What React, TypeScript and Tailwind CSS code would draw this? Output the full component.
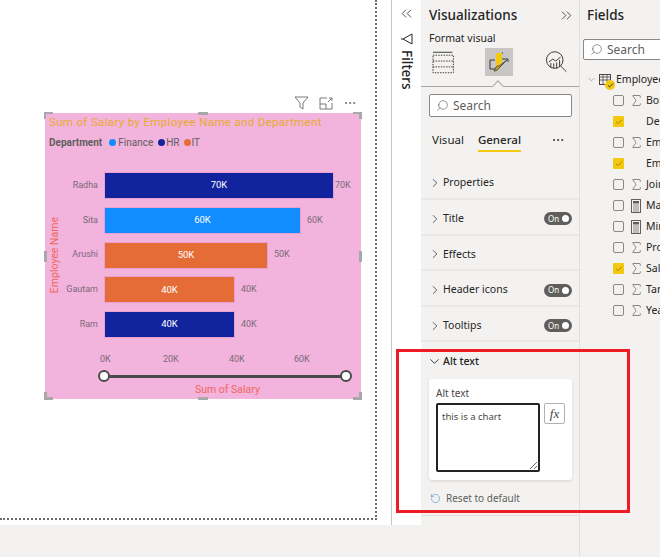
import { ChevronDown, ChevronRight, ChevronsLeft, ChevronsRight, Check, MoreHorizontal, RotateCcw, Search, Sigma } from "lucide-react";

type Bar = { name: string; value: string; width: string; color: string; gap: string };

const bars: Bar[] = [
  { name: "Radha", value: "70K", width: "w-[230px]", color: "bg-[#12239e]", gap: "ml-[1px]" },
  { name: "Sita", value: "60K", width: "w-[197px]", color: "bg-[#118dff]", gap: "ml-[6px]" },
  { name: "Arushi", value: "50K", width: "w-[164px]", color: "bg-[#e66c37]", gap: "ml-[6px]" },
  { name: "Gautam", value: "40K", width: "w-[131px]", color: "bg-[#e66c37]", gap: "ml-[6px]" },
  { name: "Ram", value: "40K", width: "w-[131px]", color: "bg-[#12239e]", gap: "ml-[6px]" },
];

const sections = [
  { label: "Properties", toggle: false },
  { label: "Title", toggle: true },
  { label: "Effects", toggle: false },
  { label: "Header icons", toggle: true },
  { label: "Tooltips", toggle: true },
];

type Field = { label: string; checked: boolean; icon: "sigma" | "calc" | "none" };

// names run off the right edge of the pane in the reference
const fields: Field[] = [
  { label: "Bon", checked: false, icon: "sigma" },
  { label: "Dep", checked: true, icon: "none" },
  { label: "Em", checked: false, icon: "sigma" },
  { label: "Em", checked: true, icon: "none" },
  { label: "Join", checked: false, icon: "sigma" },
  { label: "Ma", checked: false, icon: "calc" },
  { label: "Min", checked: false, icon: "calc" },
  { label: "Pro", checked: false, icon: "sigma" },
  { label: "Sal", checked: true, icon: "sigma" },
  { label: "Tar", checked: false, icon: "sigma" },
  { label: "Yea", checked: false, icon: "sigma" },
];

function Handle({ className }: { className: string }) {
  return <div className={`absolute bg-[#a8a8a8] ${className}`} />;
}

function Toggle() {
  return (
    <div className="flex h-[13px] w-[28px] items-center justify-between rounded-full bg-[#605e5c] pl-[4px] pr-[3px] text-[8px] leading-none text-white">
      <span>On</span>
      <span className="h-[7px] w-[7px] rounded-full bg-white" />
    </div>
  );
}

function Chart() {
  return (
    <div className="relative h-[286px] w-[316px] bg-[#f2b3dc] font-['Roboto',sans-serif]">
      <Handle className="-left-[1px] -top-[1px] h-[7px] w-[2px]" />
      <Handle className="-left-[1px] -top-[1px] h-[2px] w-[9px]" />
      <Handle className="left-[153px] -top-[1px] h-[3px] w-[10px]" />
      <Handle className="-right-[1px] -top-[1px] h-[7px] w-[3px]" />
      <Handle className="-right-[1px] -top-[1px] h-[2px] w-[9px]" />
      <Handle className="-left-[1px] top-[138px] h-[11px] w-[3px]" />
      <Handle className="-right-[1px] top-[138px] h-[11px] w-[3px]" />
      <Handle className="-left-[1px] -bottom-[1px] h-[8px] w-[3px]" />
      <Handle className="-left-[1px] -bottom-[1px] h-[3px] w-[9px]" />
      <Handle className="left-[153px] -bottom-[1px] h-[3px] w-[10px]" />
      <Handle className="-right-[1px] -bottom-[1px] h-[8px] w-[3px]" />
      <Handle className="-right-[1px] -bottom-[1px] h-[3px] w-[9px]" />

      <div className="absolute -top-[17px] right-[4px] flex items-center gap-[10px] text-[#6b6b6b]">
        <svg width="15" height="14" viewBox="0 0 15 14" fill="none" stroke="currentColor" strokeWidth="0.9">
          <path d="M1 1h13L9 7v6L6 11V7z" />
        </svg>
        <svg width="14" height="13" viewBox="0 0 14 13" fill="none" stroke="currentColor" strokeWidth="0.9">
          <path d="M8 1H1v11h12V6M1 7h6v5M9 5l4-4M10 1h3v3" />
        </svg>
        <MoreHorizontal className="h-[14px] w-[14px]" strokeWidth={1.6} />
      </div>

      <div className="pl-[4px] pt-[1px] text-[11.5px] leading-[16px] tracking-[0.34px] text-[#e8ab2c]">
        Sum of Salary by Employee Name and Department
      </div>
      <div className="mt-[4px] flex h-[16px] items-center pl-[4px] text-[10px] text-[#605e5c]">
        <span className="mr-[7px] font-bold">Department</span>
        <span className="mr-[2px] h-[7px] w-[7px] rounded-full bg-[#118dff]" />
        <span className="mr-[5px]">Finance</span>
        <span className="mr-[1px] h-[7px] w-[7px] rounded-full bg-[#12239e]" />
        <span className="mr-[4px]">HR</span>
        <span className="mr-[1px] h-[7px] w-[7px] rounded-full bg-[#e66c37]" />
        <span>IT</span>
      </div>

      <div className="mt-[22px] flex">
        <div className="flex h-[166px] w-[20px] items-center justify-center">
          <span className="rotate-180 whitespace-nowrap text-[10.5px] text-[#f0675c] [writing-mode:vertical-rl]">
            Employee Name
          </span>
        </div>
        <div className="flex flex-col gap-[7.75px]">
          {bars.map((bar) => (
            <div key={bar.name} className="flex h-[27px] items-center">
              <span className="w-[33px] text-right text-[9px] text-[#7a6a78]">{bar.name}</span>
              <div
                className={`ml-[6px] flex h-full items-center justify-center border border-[#e9a0d0] text-[9.5px] text-white ${bar.width} ${bar.color}`}
              >
                {bar.value}
              </div>
              <span className={`text-[9px] text-[#7a6a78] ${bar.gap}`}>{bar.value}</span>
            </div>
          ))}
        </div>
      </div>

      <div className="mt-[15px] flex pl-[55px] text-[9px] leading-[12px] text-[#7a6a78]">
        <span className="w-[63px]">0K</span>
        <span className="w-[66px]">20K</span>
        <span className="w-[65px]">40K</span>
        <span>60K</span>
      </div>
      <div className="ml-[53px] mt-[5px] flex items-center">
        <span className="z-10 h-[12px] w-[12px] rounded-full border-2 border-[#4a4a4a] bg-white" />
        <span className="-mx-[1px] h-[3px] w-[232px] bg-[#4a4a4a]" />
        <span className="z-10 h-[12px] w-[12px] rounded-full border-2 border-[#4a4a4a] bg-white" />
      </div>
      <div className="ml-[150px] mt-[1px] text-[10.5px] leading-[14px] text-[#f0675c]">Sum of Salary</div>
    </div>
  );
}

function FormatIcons() {
  return (
    <div className="mt-[3px] flex h-[28px] items-center px-[11px]">
      <svg width="23" height="23" viewBox="0 0 23 23" fill="none" stroke="#3b3a39" strokeWidth="1">
        <path d="M1 1h20" />
        <path d="M1 4h21v18H1zM1 10h21M1 16h21" strokeDasharray="1.5 1.2" />
      </svg>
      <div className="ml-[31px] flex h-[28px] w-[28px] items-center justify-center bg-[#c8c6c4]">
        <svg width="22" height="22" viewBox="0 0 22 22" fill="none">
          <path d="M8 2h6v9l-6 6z" fill="#f2c811" />
          <path d="M7 9H2v9h5M14 2h1M14 8h6v3" stroke="#3b3a39" strokeWidth="1" />
          <path d="M19 9l-8 8c-1 2-3 3-5 3 1-1 1-3 2-4 1-1 2-1 3-1z" fill="#c8a415" stroke="#3b3a39" strokeWidth="0.8" />
        </svg>
      </div>
      <svg className="ml-[32px]" width="24" height="24" viewBox="0 0 24 24" fill="none" stroke="#3b3a39" strokeWidth="1">
        <circle cx="10" cy="10" r="8.5" />
        <path d="M4 12l4-3 3 2 5-4M6 18v-5M9 18.5v-5M12 18.5v-6M15 17v-7M16 16l6 6" />
      </svg>
    </div>
  );
}

function VizPane() {
  return (
    <div className="relative flex h-[557px] w-[159px] shrink-0 flex-col border-r border-[#e1dfdd] bg-[#f3f2f1] font-['Noto_Sans',sans-serif] text-[#252423]">
      <div className="flex h-[31px] items-center justify-between pl-[8px] pr-[4px]">
        <span className="text-[13.5px] font-medium">Visualizations</span>
        <ChevronsRight className="h-[17px] w-[17px]" strokeWidth={1.1} />
      </div>
      <div className="pl-[8px] text-[10.5px] leading-[14px]">Format visual</div>
      <FormatIcons />
      <div className="relative mt-[10px] h-[1px] bg-[#a8a6a4]">
        <div className="absolute -top-[4px] left-[73px] h-[8px] w-[8px] rotate-45 border-l border-t border-[#a8a6a4] bg-[#f3f2f1]" />
      </div>
      <div className="mx-[8px] mt-[7px] flex h-[23px] w-[143px] items-center rounded-[2px] border border-[#8a8886] bg-white pl-[6px] text-[12px] text-[#605e5c]">
        <Search className="h-[13px] w-[13px] -scale-x-100" strokeWidth={1.2} />
        <span className="ml-[4px]">Search</span>
      </div>
      <div className="relative mt-[13px] flex h-[22px] items-start pl-[11px] text-[11.5px] leading-[20px]">
        <span>Visual</span>
        <span className="ml-[14px] border-b-2 border-[#f2c811] font-medium">General</span>
        <MoreHorizontal className="absolute right-[14px] top-[3px] h-[14px] w-[14px]" strokeWidth={1.4} />
      </div>
      <div className="mt-[12.5px] flex flex-col">
        {sections.map((section) => (
          <div
            key={section.label}
            className="flex h-[35.6px] items-center justify-between border-b-2 border-[#ebe9e7] pl-[7px] pr-[7px] pt-[4px]"
          >
            <div className="flex items-center text-[10.5px]">
              <ChevronRight className="mr-[1px] h-[14px] w-[14px]" strokeWidth={1.2} />
              {section.label}
            </div>
            {section.toggle && <Toggle />}
          </div>
        ))}
      </div>
      <div className="mt-[10px] flex h-[18px] items-center pl-[6px] text-[10.5px] font-medium">
        <ChevronDown className="mr-[1px] h-[15px] w-[15px]" strokeWidth={1.4} />
        Alt text
      </div>
      <div className="ml-[8px] mt-[9px] h-[101px] w-[143px] rounded-[3px] bg-white px-[7px] pt-[7px] shadow-[0_1px_3px_rgba(0,0,0,0.12)]">
        <div className="mb-[3px] text-[10px] leading-[14px] text-[#484644]">Alt text</div>
        <div className="flex items-start gap-[4px]">
          <div className="relative h-[69px] w-[104px] rounded-[2px] border-2 border-[#252423] bg-white px-[4px] py-[5px] text-[9.5px] leading-[14px] text-[#484644]">
            this is a chart
            <svg className="absolute bottom-[1px] right-[1px]" width="7" height="7" viewBox="0 0 7 7" stroke="#484644" strokeWidth="0.8">
              <path d="M0 7l7-7M4 7l3-3" />
            </svg>
          </div>
          <div className="flex h-[21px] w-[21px] items-center justify-center rounded-[2px] border border-[#b3b0ad] font-['Liberation_Serif',serif] text-[13px] italic text-[#484644]">
            fx
          </div>
        </div>
      </div>
      <div className="ml-[9px] mt-[10px] flex h-[16px] items-center text-[10px] text-[#605e5c]">
        <RotateCcw className="mr-[5px] h-[11px] w-[11px] text-[#4a90c2]" strokeWidth={1.3} />
        Reset to default
      </div>
      <div className="mt-[9px] h-[1px] bg-[#e1dfdd]" />
    </div>
  );
}

function Calculator() {
  return (
    <svg width="10" height="14" viewBox="0 0 10 14">
      <rect x="0.5" y="0.5" width="9" height="13" fill="#f3f2f1" stroke="#605e5c" />
      <rect x="2" y="2" width="6" height="2.5" fill="#605e5c" />
      <path d="M2 6h6M2 8h6M2 10h6M2 12h6" stroke="#8a8886" />
    </svg>
  );
}

function FieldsPane() {
  return (
    <div className="h-[557px] min-w-0 flex-1 overflow-hidden bg-[#f3f2f1] font-['Noto_Sans',sans-serif] text-[#252423]">
      <div className="flex h-[31px] items-center pl-[7px] text-[13.5px] font-medium">Fields</div>
      <div className="ml-[3px] mt-[8px] flex h-[21px] w-[90px] items-center rounded-[2px] border border-[#8a8886] bg-white pl-[6px] text-[12px] text-[#605e5c]">
        <Search className="h-[13px] w-[13px] shrink-0 -scale-x-100" strokeWidth={1.2} />
        <span className="ml-[4px]">Search</span>
      </div>
      <div className="relative mt-[9px] flex h-[21px] items-center whitespace-nowrap pl-[6px] text-[10.5px]">
        <ChevronDown className="h-[11px] w-[11px] shrink-0 text-[#605e5c]" strokeWidth={1} />
        <svg className="ml-[2px] shrink-0" width="12" height="11" viewBox="0 0 12 11" fill="none" stroke="#484644">
          <rect x="0.5" y="0.5" width="11" height="10" />
          <path d="M0 3h12M0 6h12M4 0v11M8 0v11" strokeWidth="0.8" />
        </svg>
        <span className="absolute left-[25px] top-[11px] flex h-[10px] w-[10px] items-center justify-center rounded-full bg-[#f2c811]">
          <Check className="h-[7px] w-[7px]" strokeWidth={3} />
        </span>
        <span className="ml-[5px]">Employee</span>
      </div>
      {fields.map((field, index) => (
        <div key={index} className="flex h-[21px] items-center whitespace-nowrap pl-[33px] text-[10.5px]">
          {field.checked ? (
            <span className="flex h-[11px] w-[11px] shrink-0 items-center justify-center rounded-[1px] bg-[#f2c811]">
              <Check className="h-[8px] w-[8px] text-[#7a6508]" strokeWidth={2} />
            </span>
          ) : (
            <span className="h-[11px] w-[11px] shrink-0 rounded-[2px] border border-[#8a8886] bg-[#f3f2f1]" />
          )}
          <span className="ml-[7px] flex w-[10px] shrink-0 justify-center text-[#484644]">
            {field.icon === "sigma" && <Sigma className="h-[15px] w-[15px] shrink-0" strokeWidth={1} />}
            {field.icon === "calc" && <Calculator />}
          </span>
          <span className="ml-[5px]">{field.label}</span>
        </div>
      ))}
    </div>
  );
}

export default function App() {
  return (
    <div className="relative flex h-[557px] w-[660px] overflow-hidden bg-[#f3f2f1]">
      <div className="flex h-[557px] w-[421px] shrink-0 flex-col">
        <div className="flex h-[525px] bg-white">
          <div className="h-[525px] w-[392px] shrink-0 border-r border-[#c8c6c4]">
            <div className="h-[520px] w-[377px] border-b-2 border-r-2 border-dotted border-[#6b6b6b] pl-[45px] pt-[113px]">
              <Chart />
            </div>
          </div>
          <div className="flex flex-1 flex-col items-center pt-[5px] text-[#252423]">
            <ChevronsLeft className="h-[17px] w-[17px]" strokeWidth={1.1} />
            <svg className="mt-[11px]" width="12" height="12" viewBox="0 0 12 12" fill="none" stroke="#252423">
              <path d="M0 6h2M2 6l9-5v10z" />
            </svg>
            <span className="mt-[5px] font-['Noto_Sans',sans-serif] text-[13.5px] font-medium leading-[16px] [writing-mode:vertical-rl]">
              Filters
            </span>
          </div>
        </div>
      </div>
      <VizPane />
      <FieldsPane />
      <div className="absolute left-[396px] top-[349px] h-[164px] w-[234px] border-[3px] border-[#ed1c24]" />
    </div>
  );
}
